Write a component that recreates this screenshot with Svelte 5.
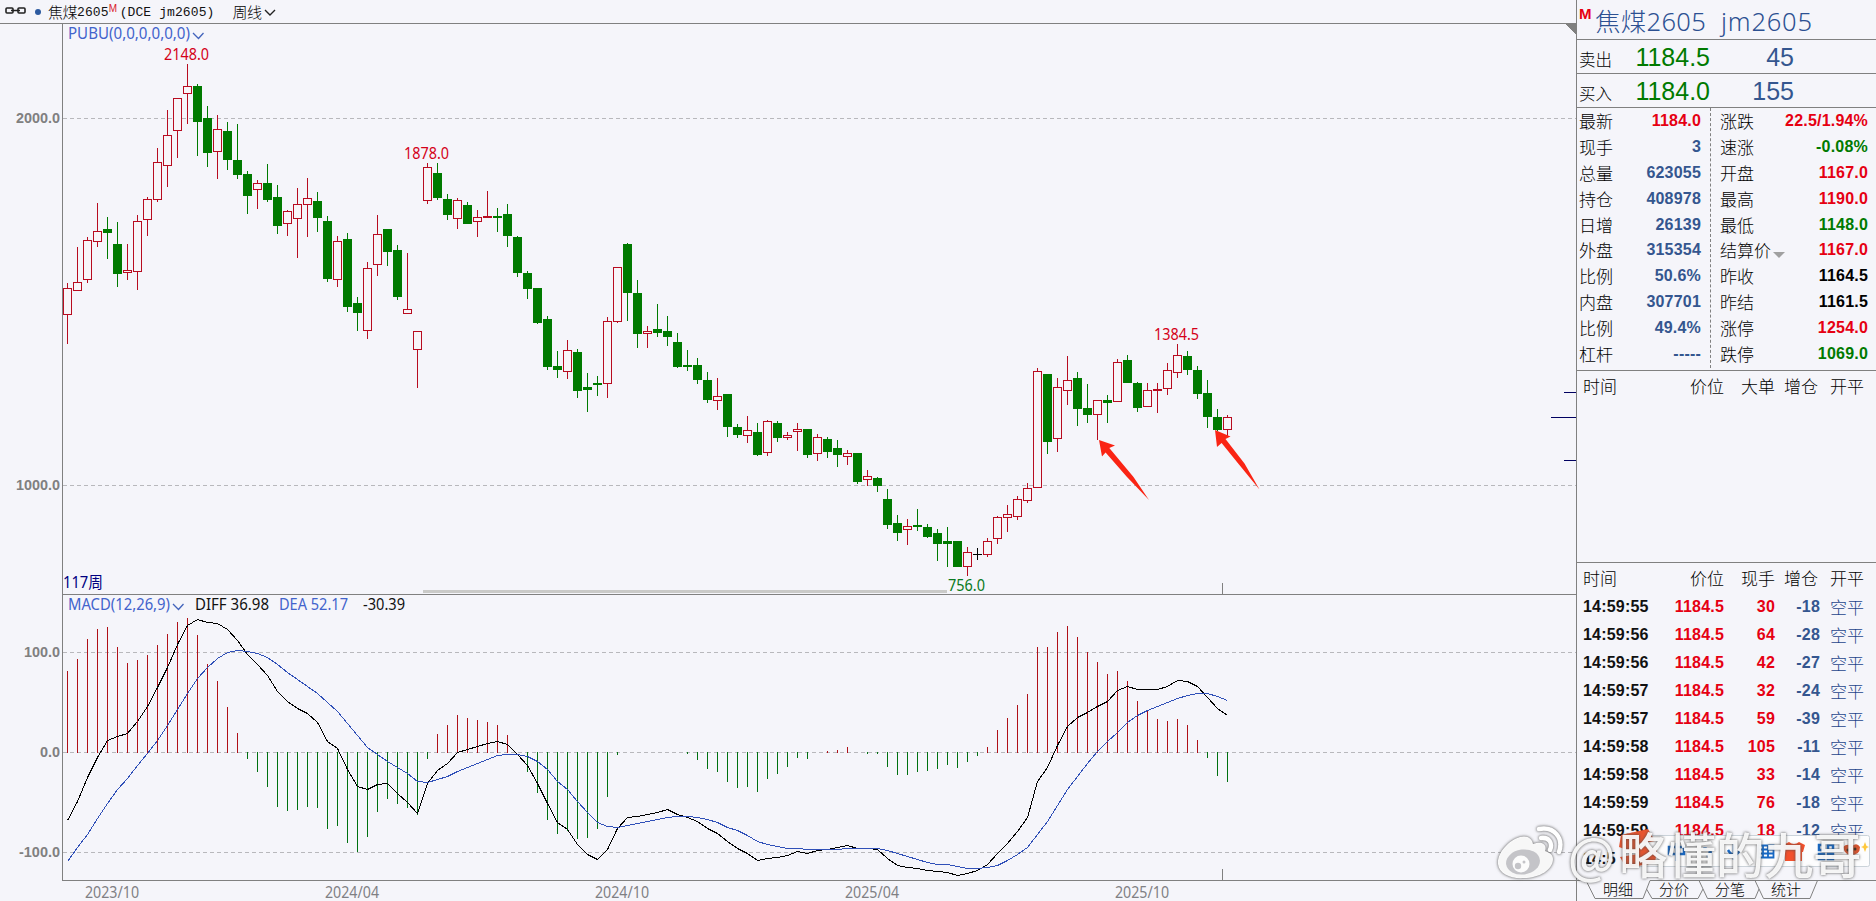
<script lang="ts">
	// high, body top, body bottom, low (plot pixels) and direction, one row per week
	type Candle = [number, number, number, number, 'r' | 'g' | 'k'];

	const candles: Candle[] = [
		[283, 288, 314, 343, 'r'], [247, 282, 290, 290, 'r'], [237, 240, 279, 282, 'r'], [203, 231, 241, 246, 'r'],
		[217, 229, 232, 258, 'g'], [222, 244, 273, 286, 'g'], [244, 270, 272, 279, 'r'], [215, 221, 271, 289, 'r'],
		[197, 199, 219, 235, 'r'], [148, 162, 199, 201, 'r'], [110, 135, 165, 186, 'r'], [98, 98, 130, 157, 'r'],
		[64, 86, 93, 123, 'r'], [84, 86, 121, 155, 'g'], [106, 118, 152, 166, 'g'], [115, 129, 151, 178, 'r'],
		[122, 131, 159, 169, 'g'], [124, 160, 174, 178, 'g'], [171, 174, 195, 213, 'g'], [180, 183, 189, 208, 'r'],
		[164, 183, 199, 201, 'g'], [185, 197, 225, 233, 'g'], [210, 211, 223, 235, 'r'], [188, 204, 218, 257, 'r'],
		[178, 198, 204, 236, 'r'], [192, 201, 217, 231, 'g'], [216, 221, 278, 281, 'g'], [236, 241, 279, 286, 'r'],
		[233, 239, 306, 311, 'g'], [297, 303, 312, 330, 'g'], [262, 268, 330, 338, 'r'], [215, 234, 264, 275, 'r'],
		[229, 229, 251, 265, 'g'], [245, 250, 296, 299, 'g'], [253, 309, 313, 313, 'r'], [331, 331, 349, 387, 'r'],
		[163, 167, 200, 203, 'r'], [163, 173, 197, 199, 'g'], [194, 199, 214, 219, 'g'], [198, 200, 218, 228, 'r'],
		[202, 205, 223, 223, 'g'], [210, 217, 221, 236, 'r'], [191, 216, 217, 217, 'r'], [208, 216, 217, 231, 'g'],
		[204, 214, 235, 246, 'g'], [236, 237, 272, 276, 'g'], [271, 273, 288, 298, 'g'], [288, 288, 322, 323, 'g'],
		[316, 319, 366, 369, 'g'], [351, 366, 369, 377, 'g'], [340, 350, 371, 378, 'r'], [349, 352, 390, 397, 'g'],
		[373, 387, 389, 411, 'g'], [376, 383, 384, 395, 'g'], [317, 321, 383, 397, 'r'], [267, 267, 321, 322, 'r'],
		[243, 244, 292, 320, 'g'], [280, 293, 333, 347, 'g'], [326, 331, 333, 347, 'r'], [304, 329, 332, 336, 'g'],
		[316, 331, 336, 345, 'g'], [333, 342, 366, 367, 'g'], [350, 365, 366, 370, 'g'], [358, 365, 379, 383, 'g'],
		[372, 380, 399, 402, 'g'], [378, 396, 400, 409, 'r'], [394, 394, 426, 436, 'g'], [424, 427, 434, 437, 'g'],
		[416, 430, 435, 442, 'r'], [423, 432, 454, 455, 'g'], [420, 421, 452, 455, 'r'], [421, 423, 437, 441, 'g'],
		[432, 435, 437, 439, 'r'], [423, 429, 431, 450, 'r'], [429, 429, 454, 457, 'g'], [434, 437, 453, 460, 'r'],
		[437, 439, 451, 457, 'g'], [440, 448, 454, 466, 'g'], [450, 453, 456, 464, 'r'], [453, 453, 481, 483, 'g'],
		[470, 476, 479, 485, 'r'], [477, 478, 485, 491, 'g'], [489, 499, 524, 528, 'g'], [515, 523, 532, 540, 'g'],
		[519, 526, 529, 544, 'r'], [509, 525, 526, 530, 'g'], [524, 527, 536, 537, 'g'], [529, 533, 543, 560, 'g'],
		[527, 541, 543, 566, 'g'], [541, 541, 566, 566, 'g'], [547, 552, 566, 575, 'r'], [548, 554, 554, 559, 'k'],
		[538, 541, 554, 556, 'r'], [516, 517, 538, 543, 'r'], [505, 514, 517, 531, 'r'], [496, 499, 516, 519, 'r'],
		[483, 488, 500, 502, 'r'], [368, 371, 487, 487, 'r'], [374, 374, 441, 453, 'g'], [378, 387, 438, 451, 'r'],
		[356, 380, 390, 404, 'r'], [372, 378, 408, 425, 'g'], [384, 408, 414, 422, 'g'], [400, 400, 414, 439, 'r'],
		[395, 400, 402, 422, 'g'], [359, 362, 401, 401, 'r'], [355, 360, 382, 382, 'g'], [382, 383, 407, 411, 'g'],
		[383, 390, 406, 406, 'r'], [383, 389, 390, 412, 'r'], [363, 370, 388, 394, 'r'], [344, 355, 372, 377, 'r'],
		[351, 356, 369, 374, 'g'], [366, 370, 393, 398, 'g'], [380, 393, 416, 427, 'g'], [409, 417, 429, 430, 'g'],
		[415, 417, 429, 435, 'r']
	];

	const zero = 752;

	const macd = [
		671, 659, 639, 629, 627, 647, 663, 660, 655, 645, 634, 622, 618, 635, 664, 681, 707, 733, 758, 771, 786, 806,
		810, 809, 806, 807, 828, 825, 842, 851, 836, 811, 798, 803, 807, 814, 758, 734, 725, 715, 718, 720, 722, 725,
		735, 752, 771, 792, 819, 833, 830, 838, 837, 828, 796, 754, 752, 752, 752, 752, 752, 752, 753, 759, 768, 771,
		781, 787, 786, 791, 778, 773, 766, 757, 758, 752, 751, 750, 747, 752, 753, 753, 766, 774, 774, 771, 770, 768,
		764, 767, 761, 755, 747, 730, 718, 705, 694, 647, 647, 632, 626, 637, 652, 662, 674, 671, 681, 701, 710, 719,
		721, 719, 725, 740, 757, 775, 781
	];

	const diff = [
		820, 801, 777, 757, 740, 736, 733, 721, 706, 687, 667, 644, 625, 619, 622, 623, 629, 640, 654, 664, 675, 691,
		701, 708, 713, 722, 741, 748, 769, 786, 789, 784, 783, 793, 802, 813, 783, 770, 763, 752, 749, 746, 743, 741,
		744, 754, 765, 783, 803, 822, 829, 844, 854, 859, 849, 828, 817, 816, 814, 812, 809, 814, 817, 821, 828, 833,
		841, 848, 853, 860, 858, 857, 855, 851, 853, 850, 849, 847, 845, 848, 848, 849, 858, 865, 867, 868, 870, 871,
		872, 875, 873, 870, 864, 853, 843, 831, 817, 781, 767, 745, 726, 717, 712, 706, 701, 690, 686, 689, 689, 689,
		686, 680, 681, 686, 697, 708, 715
	];

	const dea = [
		861, 847, 834, 818, 803, 789, 778, 765, 753, 740, 725, 709, 693, 678, 667, 658, 652, 650, 651, 653, 657, 664,
		672, 679, 686, 693, 702, 711, 723, 735, 747, 754, 761, 767, 773, 781, 782, 779, 776, 771, 767, 763, 759, 755,
		754, 754, 756, 761, 769, 781, 789, 801, 812, 822, 826, 827, 825, 823, 821, 819, 817, 816, 816, 817, 819, 822,
		827, 830, 835, 841, 844, 846, 848, 848, 849, 849, 849, 849, 848, 848, 848, 848, 850, 853, 856, 859, 862, 864,
		864, 866, 868, 868, 867, 865, 860, 854, 847, 834, 821, 805, 789, 776, 763, 751, 741, 732, 722, 715, 710, 706,
		702, 698, 695, 693, 693, 696, 700
	];

	const x = (i: number) => 67 + i * 10;
	const line = (ys: number[]) => ys.map((y, i) => `${x(i) + 0.5},${y + 0.5}`).join(' ');

	const grid = [
		{ y: 118, label: '2000.0', w: 44 },
		{ y: 485, label: '1000.0', w: 44 },
		{ y: 652, label: '100.0', w: 36 },
		{ y: 752, label: '0.0', w: 20 },
		{ y: 852, label: '-100.0', w: 41 }
	];

	const dates = [
		{ x: 85, label: '2023/10' },
		{ x: 325, label: '2024/04' },
		{ x: 595, label: '2024/10' },
		{ x: 845, label: '2025/04' },
		{ x: 1115, label: '2025/10' }
	];

	const left = [
		['最新', '1184.0', 'red'],
		['现手', '3', 'blue'],
		['总量', '623055', 'blue'],
		['持仓', '408978', 'blue'],
		['日增', '26139', 'blue'],
		['外盘', '315354', 'blue'],
		['比例', '50.6%', 'blue'],
		['内盘', '307701', 'blue'],
		['比例', '49.4%', 'blue'],
		['杠杆', '-----', 'blue']
	];

	const right = [
		['涨跌', '22.5/1.94%', 'red'],
		['速涨', '-0.08%', 'green'],
		['开盘', '1167.0', 'red'],
		['最高', '1190.0', 'red'],
		['最低', '1148.0', 'green'],
		['结算价', '1167.0', 'red'],
		['昨收', '1164.5', 'black'],
		['昨结', '1161.5', 'black'],
		['涨停', '1254.0', 'red'],
		['跌停', '1069.0', 'green']
	];

	const ticks = [
		['14:59:55', '30', '-18'],
		['14:59:56', '64', '-28'],
		['14:59:56', '42', '-27'],
		['14:59:57', '32', '-24'],
		['14:59:57', '59', '-39'],
		['14:59:58', '105', '-11'],
		['14:59:58', '33', '-14'],
		['14:59:59', '76', '-18'],
		['14:59:59', '18', '-12']
	];
</script>

<div class="terminal">
	<main>
		<header>
			<svg class="link" width="21" height="8" viewBox="0 0 21 8">
				<path d="M7 1H2Q1 1 1 2V5Q1 6 2 6H7Q8 6 8 5V2Q8 1 7 1ZM19 1H14Q13 1 13 2V5Q13 6 14 6H19Q20 6 20 5V2Q20 1 19 1ZM6 3.500H15" />
			</svg>
			<span class="dot"></span>
			<span class="cn">焦煤</span><span class="mono">2605</span><sup>M</sup>
			<span class="mono code">(DCE jm2605)</span>
			<span class="cn period">周线</span>
			<svg class="chev" width="12" height="7" viewBox="0 0 12 7"><path d="M1 1L6 6L11 1" /></svg>
		</header>

		<svg class="plot" width="1576" height="877" viewBox="0 24 1576 877">
			<g class="axis">
				{#each grid as g}
					<line class="dash" x1="63" x2="1576" y1={g.y + 0.5} y2={g.y + 0.5} />
					<text x={60 - g.w} y={g.y + 5} textLength={g.w} lengthAdjust="spacingAndGlyphs">{g.label}</text>
				{/each}
				<path d="M62.5 24V880.5H1576M62 594.5H1576M1222.5 583V594M1222.5 869V880" />
			</g>
			<path class="corner" d="M1565 24H1576V35Z" />
			<rect class="scroll" x="423" y="590" width="524" height="3" rx="1.5" />
			<path class="marks" d="M1564 392.5H1576M1551 417.5H1576M1564 460.5H1576" />

			{#each candles as [high, top, bottom, low, kind], i}
				<g class="candle {kind}">
					<rect class="wick" x={x(i)} y={high} width="1" height={low - high + 1} />
					{#if kind === 'r'}
						<rect class="hollow" x={x(i) - 3.5} y={top + 0.5} width="8" height={bottom - top} />
					{:else}
						<rect x={x(i) - 4} y={top} width="9" height={bottom - top + 1} />
					{/if}
				</g>
			{/each}

			{#each macd as y, i}
				{#if y < zero}
					<rect class="up" x={x(i)} {y} width="1" height={zero - y + 1} />
				{:else if y > zero}
					<rect class="down" x={x(i)} y={zero} width="1" height={y - zero + 1} />
				{/if}
			{/each}
			<polyline class="diff" points={line(diff)} />
			<polyline class="dea" points={line(dea)} />

			<g class="arrows">
				<path d="M1099 440L1115 445.6L1109.3 448L1133.5 477L1149 500L1127 477L1105.6 452.5L1102 456.5Z" />
				<path d="M1215 430L1230.5 436.5L1225.5 439L1244.5 463.5L1259.5 489.5L1239 464.5L1221.6 443L1217 447Z" />
			</g>

			<g class="label">
				<text class="ind" x="68" y="39" textLength="122" lengthAdjust="spacingAndGlyphs">PUBU(0,0,0,0,0,0)</text>
				<text class="peak" x="164" y="60" textLength="45" lengthAdjust="spacingAndGlyphs">2148.0</text>
				<text class="peak" x="404" y="159" textLength="45" lengthAdjust="spacingAndGlyphs">1878.0</text>
				<text class="peak" x="1154" y="340" textLength="45" lengthAdjust="spacingAndGlyphs">1384.5</text>
				<text class="trough" x="948" y="591" textLength="37" lengthAdjust="spacingAndGlyphs">756.0</text>
				<text class="count" x="63" y="588" textLength="40" lengthAdjust="spacingAndGlyphs">117周</text>
				<text class="ind" x="68" y="610" textLength="102" lengthAdjust="spacingAndGlyphs">MACD(12,26,9)</text>
				<text x="195" y="610" textLength="74" lengthAdjust="spacingAndGlyphs">DIFF 36.98</text>
				<text class="ind" x="279" y="610" textLength="69" lengthAdjust="spacingAndGlyphs">DEA 52.17</text>
				<text x="363" y="610" textLength="42" lengthAdjust="spacingAndGlyphs">-30.39</text>
				{#each dates as d}
					<text class="date" x={d.x} y="898" textLength="54" lengthAdjust="spacingAndGlyphs">{d.label}</text>
				{/each}
			</g>
			<path class="toggle" d="M193 33L198.500 38.500L203.500 33M173 604L178.500 609.500L183.500 604" />
		</svg>
	</main>

	<aside>
		<div class="title"><sup>M</sup><span class="name">焦煤2605</span><span class="symbol">jm2605</span></div>
		<div class="quote"><span class="side">卖出</span><span class="price">1184.5</span><span class="lots">45</span></div>
		<div class="quote"><span class="side">买入</span><span class="price">1184.0</span><span class="lots">155</span></div>

		<div class="stats">
			<dl>
				{#each left as [name, value, color]}
					<div class="stat"><dt>{name}</dt><dd class={color}>{value}</dd></div>
				{/each}
			</dl>
			<dl>
				{#each right as [name, value, color]}
					<div class="stat">
						<dt>{name}{#if name === '结算价'}<i class="caret"></i>{/if}</dt>
						<dd class={color}>{value}</dd>
					</div>
				{/each}
			</dl>
		</div>

		<div class="big-orders">
			<div class="row head"><span>时间</span><span>价位</span><span>大单</span><span>增仓</span><span>开平</span></div>
		</div>

		<div class="trades">
			<div class="row head"><span>时间</span><span>价位</span><span>现手</span><span>增仓</span><span>开平</span></div>
			{#each ticks as [time, lots, delta]}
				<div class="row tick">
					<span>{time}</span>
					<span class="red">1184.5</span>
					<span class="red">{lots}</span>
					<span class="blue">{delta}</span>
					<span class="kind">空平</span>
				</div>
			{/each}
			<div class="row tick"><span>14:5</span></div>
		</div>

		<nav>
			<svg width="300" height="21" viewBox="1576 880 300 21">
				<path d="M1576 880.5H1586L1595 898.500H1643L1650 880.500H1876M1646.500 889L1652 898.500H1698L1703 889M1699 880.500L1707.500 898.500H1755L1759 889M1755 880.500L1763.500 898.500H1810L1817.500 880.500" />
			</svg>
			<span>明细</span><span>分价</span><span>分笔</span><span>统计</span>
		</nav>
	</aside>

	<!-- input method bar floating over the trade list -->
	<svg class="ime" width="256" height="44" viewBox="1618 826 256 44">
		<rect x="1632.500" y="835.500" width="237" height="31" rx="2" fill="#fdfdfe" stroke="#cbd3da" />
		<path d="M1621 835L1648 829L1655 841L1637 844L1657 850L1655 863L1626 868L1620 857L1638 854L1619 847Z" fill="#e8552f" />
		<g fill="none" stroke="#1768c4" stroke-width="2.500">
			<path d="M1669 847H1684V854H1669ZM1676.500 843V861" />
			<path d="M1705 847V851M1710 851Q1711 855 1707 857" stroke-width="3.500" />
			<path d="M1734 844V853M1728 850Q1734 860 1740 850M1734 856V860" />
			<path d="M1758.500 845.500H1773.500V857.500H1758.500ZM1758 849.500H1774M1758 853.500H1774M1763 845V858M1768 845V858" stroke-width="1.800" />
			<path d="M1819 845H1824V850H1819ZM1828 845H1833V850H1828ZM1819 854H1824V859H1819ZM1828 854H1833V859H1828Z" />
		</g>
		<path d="M1783 845L1789 842Q1794 846 1799 842L1805 845L1803 852H1802V861H1785V852H1784Z" fill="#f4512c" />
		<path d="M1843 847Q1847 843 1852 846Q1857 842 1860 847Q1860 855 1851 855Q1845 855 1843 847Z" fill="#d4542f" />
		<circle cx="1848" cy="850" r="1.500" fill="#432" />
		<circle cx="1855" cy="849" r="1.500" fill="#432" />
		<path d="M1865 842L1866.500 846L1869 847L1866.500 848L1865 852L1863.500 848L1861 847L1863.500 846Z" fill="#ffc83d" />
	</svg>

	<div class="watermark">
		<svg width="68" height="58" viewBox="0 0 68 58">
			<path d="M23 12C12 15 0 28 1 39C2 49 14 54 27 53C42 53 56 45 56 34C56 29 51 27 48 26C50 21 47 15 36 19C35 14 31 10 23 12Z" />
			<ellipse class="eye" cx="26" cy="37" rx="17" ry="12.500" transform="rotate(-8 26 37)" />
			<circle cx="24" cy="39" r="8.500" />
			<circle class="pupil" cx="21" cy="41" r="3.200" />
			<circle class="pupil" cx="27" cy="37" r="1.500" />
			<path class="wave" d="M44 13C52 12 56 18 53 25M42 4C57 1 67 13 62 27" />
		</svg>
		<span class="at">@</span><span>略懂的九哥</span>
	</div>
</div>

<style>
	:global(body) {
		margin: 0;
		background: #f5f5fa;
		overflow: hidden;
	}

	.terminal {
		position: relative;
		display: flex;
		width: 1876px;
		height: 901px;
		overflow: hidden;
		background: #f5f5fa;
		font-family: 'Liberation Sans', 'Noto Sans CJK SC', sans-serif;
		color: #111;
	}

	main {
		width: 1576px;
		flex-shrink: 0;
	}

	header {
		display: flex;
		align-items: center;
		box-sizing: border-box;
		height: 24px;
		padding: 0 0 1px 5px;
		border-bottom: 1px solid #808080;
		white-space: pre;
	}

	header svg {
		fill: none;
		stroke: #222;
	}

	.link {
		stroke-width: 1.6;
	}

	.dot {
		width: 6px;
		height: 6px;
		margin: 2px 7px 0 9px;
		border-radius: 50%;
		background: #2c5aa0;
	}

	.cn {
		font-family: 'Noto Sans CJK SC', sans-serif;
		font-weight: 300;
		font-size: 15px;
		line-height: 22px;
		padding-top: 1px;
		color: #000;
	}

	.mono {
		font-family: 'Liberation Mono', monospace;
		font-size: 13px;
		letter-spacing: 0.1px;
		padding-top: 3px;
	}

	header .cn {
		letter-spacing: -0.5px;
	}

	header sup {
		width: 10px;
		font-size: 10px;
		line-height: 10px;
		margin-bottom: 5px;
		color: #d9202c;
	}

	.code {
		margin-left: 1px;
	}

	.period {
		margin-left: 18px;
	}

	.chev {
		margin: 3px 0 0 3px;
		stroke-width: 1.4;
	}

	.plot {
		display: block;
		shape-rendering: crispEdges;
	}

	.axis path,
	.axis line {
		fill: none;
		stroke: #808080;
	}

	.axis .dash {
		stroke: #b8b8bc;
		stroke-dasharray: 4 3;
	}

	.axis text {
		font: bold 15px 'Liberation Sans', sans-serif;
		fill: #808080;
	}

	.corner {
		fill: #808080;
	}

	.scroll {
		fill: #cacac8;
	}

	.marks {
		fill: none;
		stroke: #000060;
	}

	.r {
		fill: #b80c20;
	}

	.g {
		fill: #007a00;
	}

	.k {
		fill: #000;
	}

	.hollow {
		fill: #f8f5f9;
		stroke: #b80c20;
	}

	.up {
		fill: #b01018;
	}

	.down {
		fill: #007010;
	}

	.diff,
	.dea {
		fill: none;
		stroke: #000;
	}

	.dea {
		stroke: #3050b8;
	}

	.arrows {
		fill: #fa2414;
		shape-rendering: auto;
	}

	.label text {
		font: 15.5px 'Noto Sans', 'Noto Sans CJK SC', sans-serif;
		fill: #111;
	}

	.label .ind {
		fill: #4263cc;
	}

	.label .peak {
		fill: #d40018;
	}

	.label .trough {
		fill: #0a7a22;
	}

	.label .count {
		fill: #000080;
	}

	.label .date {
		fill: #808084;
	}

	.toggle {
		fill: none;
		stroke: #4263bc;
		stroke-width: 1.3;
		shape-rendering: auto;
	}

	aside {
		display: flex;
		flex-direction: column;
		width: 299px;
		height: 901px;
		border-left: 1px solid #808080;
	}

	.title,
	.quote {
		display: flex;
		box-sizing: border-box;
		border-bottom: 1px solid #808080;
		white-space: nowrap;
	}

	.title {
		height: 40px;
		padding-left: 2px;
		color: #2c5092;
		font: 300 25.5px/42px 'Open Sans', 'Noto Sans CJK SC', sans-serif;
	}

	.title sup {
		width: 16px;
		color: #e60012;
		font: bold 15px/27px 'Liberation Sans', sans-serif;
	}

	.name,
	.symbol {
		font-family: 'Noto Sans', 'Noto Sans CJK SC', sans-serif;
		font-weight: 300;
	}

	.name {
		letter-spacing: 0.3px;
	}

	.symbol {
		margin-left: 15px;
		letter-spacing: 0.8px;
	}

	.quote {
		height: 34px;
		align-items: center;
		padding-left: 2px;
	}

	.side {
		width: 51px;
		padding-top: 5px;
		font: 300 16.5px/20px 'Noto Sans CJK SC', sans-serif;
		color: #000;
	}

	.price,
	.lots {
		padding-top: 2px;
		font-size: 25px;
		color: #007a00;
	}

	.price {
		width: 80px;
		text-align: right;
	}

	.lots {
		width: 84px;
		text-align: right;
		color: #34568f;
	}

	.stats {
		display: flex;
		box-sizing: border-box;
		height: 263px;
		border-bottom: 1px solid #808080;
	}

	dl {
		box-sizing: border-box;
		width: 134px;
		height: 260px;
		margin: 0;
		padding: 0 9px 0 2px;
		border-right: 1px dashed #808080;
	}

	dl + dl {
		width: 165px;
		padding: 0 8px 0 9px;
		border: 0;
	}

	.stat {
		display: flex;
		justify-content: space-between;
		height: 25.9px;
		line-height: 26px;
	}

	dt {
		display: flex;
		font: 300 17px/25px 'Noto Sans CJK SC', sans-serif;
		color: #000;
	}

	dd {
		margin: 0;
		font-weight: bold;
		font-size: 16px;
		letter-spacing: 0.2px;
	}

	.caret {
		margin: 15px 0 0 2px;
		width: 0;
		height: 0;
		border: 6px solid transparent;
		border-top-color: #a0a0a0;
		border-bottom: 0;
	}

	.red {
		color: #e60012;
	}

	.green {
		color: #007a00;
	}

	.blue {
		color: #34568f;
	}

	.black {
		color: #000;
	}

	.big-orders {
		box-sizing: border-box;
		height: 192px;
		padding-top: 2px;
		border-bottom: 1px solid #808080;
	}

	.trades {
		height: 317px;
		padding-top: 2px;
		overflow: hidden;
		box-sizing: border-box;
	}

	.row {
		display: grid;
		grid-template-columns: 76px 65px 51px 45px 44px;
		height: 28px;
		padding-left: 6px;
		line-height: 28px;
		text-align: right;
	}

	.row span:first-child {
		text-align: left;
		white-space: nowrap;
	}

	.head {
		font: 300 17px/26px 'Noto Sans CJK SC', sans-serif;
		color: #000;
	}

	.head span:nth-child(4) {
		margin-right: 2px;
	}

	.tick {
		font-weight: bold;
		font-size: 16px;
		letter-spacing: 0.2px;
	}

	.tick .kind {
		font: 300 17px/27px 'Noto Sans CJK SC', sans-serif;
		letter-spacing: 0;
		color: #1f468c;
	}

	nav {
		display: flex;
		position: relative;
		gap: 26px;
		margin-left: -1px;
		padding-left: 27px;
		font: 300 15px/18px 'Noto Sans CJK SC', sans-serif;
		color: #000;
	}

	nav svg {
		position: absolute;
		left: 0;
		top: 0;
		fill: none;
		stroke: #808080;
	}

	.ime {
		position: absolute;
		left: 1618px;
		top: 826px;
	}

	.watermark {
		position: absolute;
		left: 1497px;
		top: 825px;
		display: flex;
		align-items: flex-start;
		font: 500 48.500px/57px 'Noto Sans CJK SC', sans-serif;
		color: rgba(255, 255, 255, 0.92);
		white-space: nowrap;
		filter: drop-shadow(0 0 1px rgba(70, 70, 70, 0.5)) drop-shadow(0 0 1.500px rgba(80, 80, 80, 0.6));
	}

	.watermark svg {
		fill: rgba(255, 255, 255, 0.95);
	}

	.watermark .eye,
	.watermark .pupil {
		fill: #c4c4c8;
	}

	.watermark .wave {
		fill: none;
		stroke: #fff;
		stroke-width: 4.5;
		stroke-linecap: round;
	}

	.at {
		width: 51px;
		margin-left: 3px;
	}
</style>
